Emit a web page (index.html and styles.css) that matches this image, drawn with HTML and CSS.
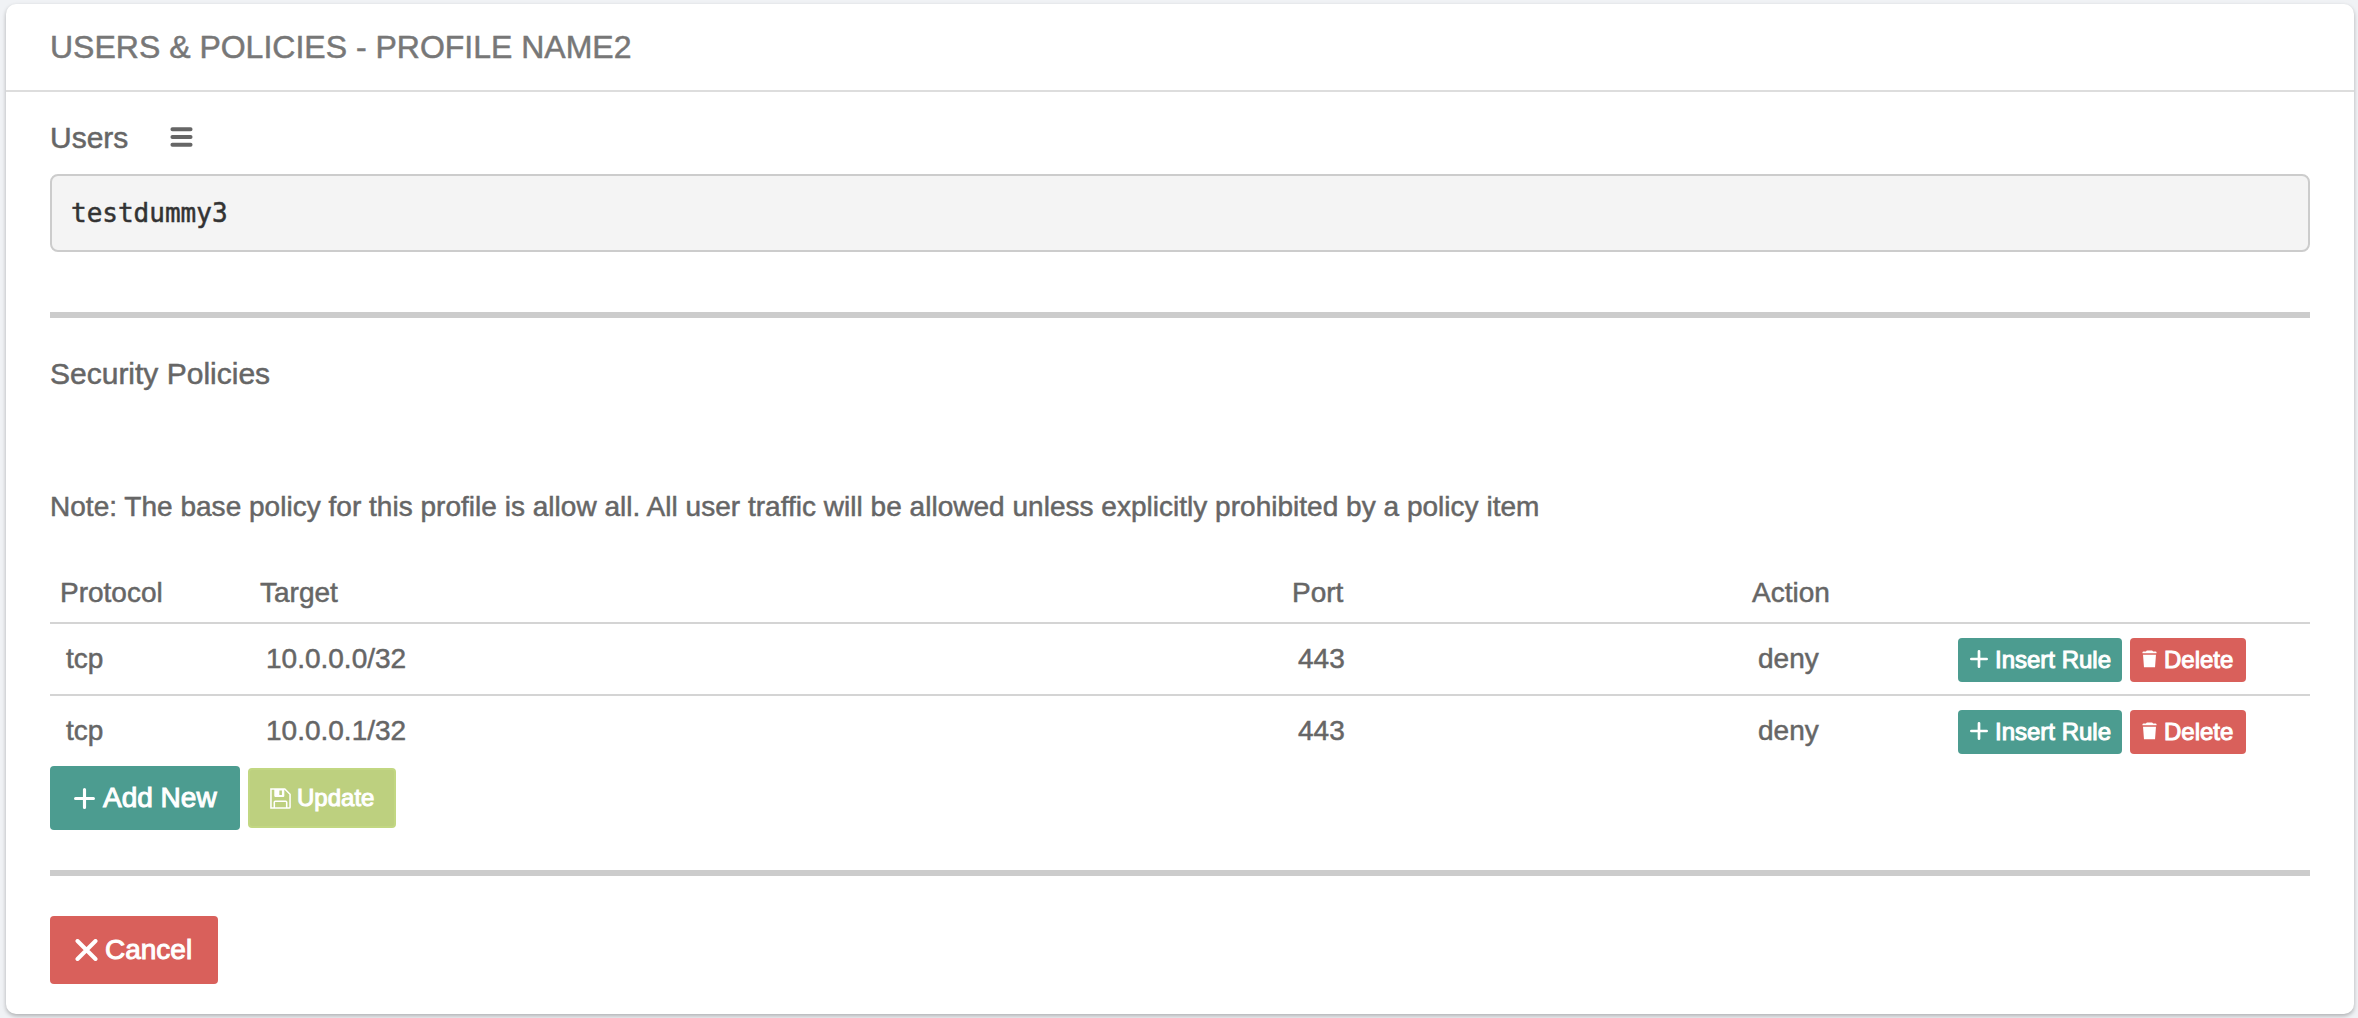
FILE: index.html
```html
<!DOCTYPE html>
<html lang="en">
<head>
<meta charset="utf-8">
<title>Users &amp; Policies</title>
<link rel="stylesheet" href="styles.css">
</head>
<body>
<svg class="sprite" aria-hidden="true">
  <symbol id="plus" viewBox="0 0 20 20"><path d="M10 1.500v17M1.500 10h17" fill="none" stroke="currentColor" stroke-width="3" stroke-linecap="round"/></symbol>
  <symbol id="cross" viewBox="0 0 22 22"><path d="M2 2l18 18M20 2L2 20" fill="none" stroke="currentColor" stroke-width="4" stroke-linecap="round"/></symbol>
  <symbol id="trash" viewBox="0 0 16 20"><path d="M.5 3.9V2.8Q.7 2.1 1.5 2H4.2L4.8 1.2Q5.1.9 5.6.9H10.4Q10.9.9 11.2 1.2L11.8 2H14.5Q15.3 2.1 15.5 2.8V3.9zM1.1 5.4H14.9L13.9 18.9H2.1z" fill="currentColor"/></symbol>
  <symbol id="save" viewBox="0 0 22 22"><path d="M1 1h14.5L21 6.500V20.200a.8.8 0 0 1-.8.8H1zM4.500 21v-6.200a1 1 0 0 1 1-1h11a1 1 0 0 1 1 1V21" fill="none" stroke="currentColor" stroke-width="1.600"/><path d="M4.500 1h10.500v7.500a.8.8 0 0 1-.8.8H5.300a.8.8 0 0 1-.8-.8zM9.800 2.600v4.700h2.700V2.600z" fill="currentColor" fill-rule="evenodd"/></symbol>
</svg>
<section class="card">
  <header class="card-header">USERS &amp; POLICIES - PROFILE NAME2</header>
  <div class="card-body">
    <div class="section-title users-title">
      <span>Users</span>
      <svg class="menu-icon" viewBox="0 0 22 20"><path d="M1.900 2.200h18.200M1.900 10h18.200M1.900 17.800h18.200" fill="none" stroke="currentColor" stroke-width="3.900" stroke-linecap="round"/></svg>
    </div>
    <pre class="users">testdummy3</pre>
    <hr class="rule">
    <div class="section-title policies-title">Security Policies</div>
    <p class="note">Note: The base policy for this profile is allow all. All user traffic will be allowed unless explicitly prohibited by a policy item</p>
    <div class="table">
      <div class="row head"><span>Protocol</span><span>Target</span><span>Port</span><span>Action</span></div>
      <div class="row"><span>tcp</span><span>10.0.0.0/32</span><span>443</span><span>deny</span>
        <div class="row-actions">
          <button class="btn small teal insert"><svg class="i-plus-s"><use href="#plus"/></svg>Insert Rule</button>
          <button class="btn small red delete"><svg class="i-trash"><use href="#trash"/></svg>Delete</button>
        </div>
      </div>
      <div class="row"><span>tcp</span><span>10.0.0.1/32</span><span>443</span><span>deny</span>
        <div class="row-actions">
          <button class="btn small teal insert"><svg class="i-plus-s"><use href="#plus"/></svg>Insert Rule</button>
          <button class="btn small red delete"><svg class="i-trash"><use href="#trash"/></svg>Delete</button>
        </div>
      </div>
    </div>
    <div class="actions">
      <button class="btn teal add"><svg class="i-plus"><use href="#plus"/></svg>Add New</button>
      <button class="btn green update"><svg class="i-save"><use href="#save"/></svg>Update</button>
    </div>
    <hr class="rule lower">
    <button class="btn red cancel"><svg class="i-cross"><use href="#cross"/></svg>Cancel</button>
  </div>
</section>
</body>
</html>
```
FILE: styles.css
```css
* { box-sizing: border-box; }
body {
  margin: 0;
  height: 1018px;
  padding: 4px 4px 4px 6px;
  overflow: hidden;
  background: #f0f2f5;
  color: #666;
  font: 28px "Liberation Sans", Arial, sans-serif;
  -webkit-text-stroke: 0.500px currentColor;
}
.sprite { display: none; }
.card {
  height: 1010px;
  background: #fff;
  border-radius: 10px;
  box-shadow: 0 2px 4px rgba(0, 0, 0, 0.28);
}
.card-header {
  height: 88px;
  padding-left: 44px;
  border-bottom: 2px solid #ddd;
  color: #777;
  font-size: 32px;
  line-height: 86px;
}
.card-body { padding: 28px 44px 0; }
.section-title { font-size: 30px; line-height: 34px; }
.users-title { display: flex; align-items: center; gap: 42px; }
.users-title span { padding-top: 1px; margin-bottom: -1px; }
.menu-icon { width: 23px; height: 20px; }
.users {
  height: 78px;
  margin: 20px 0 0;
  padding: 0 19px;
  border: 2px solid #ccc;
  border-radius: 8px;
  background: #f4f4f4;
  color: #333;
  font: 26px/75px "DejaVu Sans Mono", monospace;
}
.rule { height: 6px; margin: 60px 0 0; border: 0; background: #ccc; }
.policies-title { margin-top: 39px; }
.note { margin: 96px 0 35px; line-height: 40px; letter-spacing: 0.020px; white-space: nowrap; }
.row {
  display: grid;
  grid-template-columns: 200px 1032px 460px 206px 1fr;
  height: 72px;
  border-top: 2px solid #d4d4d4;
  line-height: 69px;
}
.row > span { padding-left: 16px; }
.row.head { height: 60px; border: 0; line-height: 62px; }
.row.head > span { padding-left: 10px; }
.row-actions { display: flex; gap: 8px; padding: 14px 0 0 10px; }
.btn {
  display: flex;
  align-items: center;
  margin: 0;
  border: 0;
  border-radius: 4px;
  color: #fff;
  font: 28px "Liberation Sans", Arial, sans-serif;
  white-space: nowrap;
  -webkit-text-stroke: 1px #fff;
}
.btn svg { flex: none; }
.teal { background: #4c9c90; }
.red { background: #d9605b; }
.green { background: #bdd07f; }
.small { height: 44px; padding: 0 0 1px 12px; font-size: 24px; }
.insert { width: 164px; }
.delete { width: 116px; }
.i-plus-s { width: 18px; height: 18px; margin: 0 7px 2px 0; }
.i-trash { width: 15px; height: 20px; margin: 0 7px 2px 0; }
.actions { display: flex; align-items: center; gap: 8px; height: 64px; }
.add { width: 190px; height: 64px; padding: 0 0 0 24px; }
.i-plus { width: 21px; height: 21px; margin-right: 8px; }
.update { width: 148px; height: 60px; padding: 0 0 0 20px; border: 2px solid #c2d782; font-size: 24px; }
.i-save { width: 21px; height: 21px; margin-right: 6px; }
.lower { margin-top: 40px; }
.cancel { width: 168px; height: 68px; margin-top: 40px; padding: 0 0 0 25px; }
.i-cross { width: 23px; height: 22px; margin-right: 7px; }
```
